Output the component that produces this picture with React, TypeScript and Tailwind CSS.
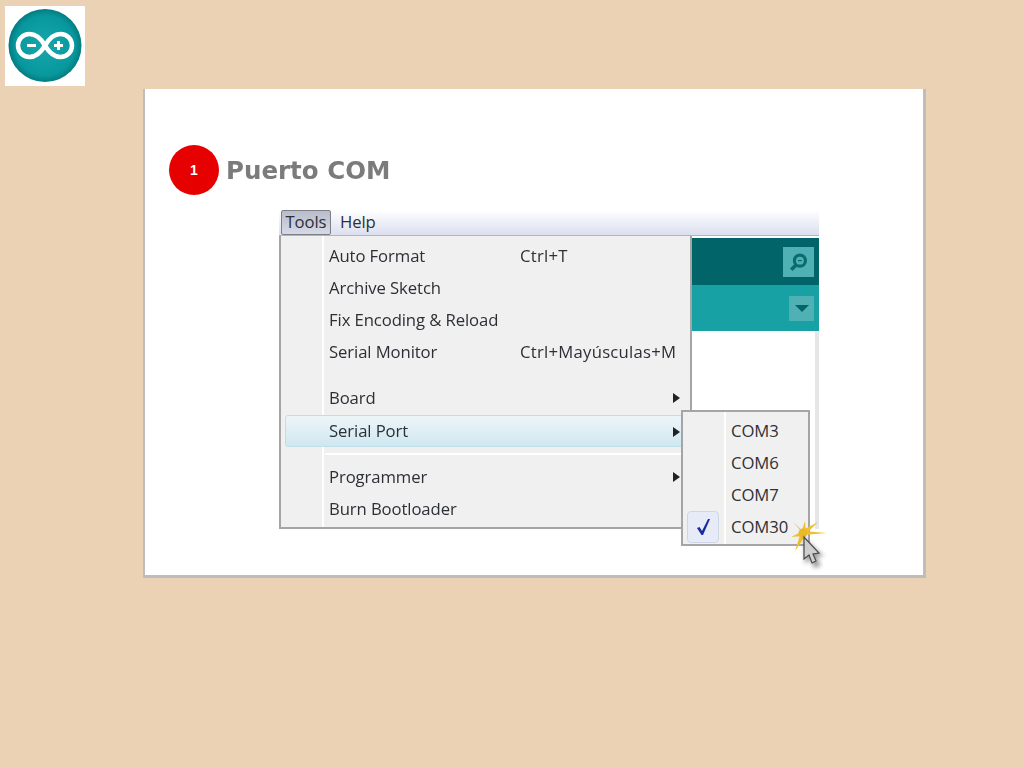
const uiFont = "font-['Open_Sans','Liberation_Sans',sans-serif]";

function ArduinoLogo() {
  return (
    <div className="h-20 w-20 bg-white">
      <svg viewBox="0 0 80 80" className="h-20 w-20 blur-[0.4px]">
        <defs>
          <radialGradient id="tealDisc" cx="50%" cy="50%" r="50%">
            <stop offset="0%" stopColor="#17a6ab" />
            <stop offset="82%" stopColor="#07989d" />
            <stop offset="100%" stopColor="#047b80" />
          </radialGradient>
        </defs>
        <circle cx="40" cy="39.5" r="36.5" fill="url(#tealDisc)" />
        <path
          d="M40 39.5C35 31 30 28 24.5 28C18 28 13 33 13 39.5C13 46 18 51 24.5 51C30 51 35 48 40 39.5C45 31 50 28 55.5 28C62 28 67 33 67 39.5C67 46 62 51 55.5 51C50 51 45 48 40 39.5Z"
          fill="none"
          stroke="#fff"
          strokeWidth="4.5"
        />
        <path d="M22 39.5H31M49 39.5H58M53.5 35V44" fill="none" stroke="#fff" strokeWidth="3" />
      </svg>
    </div>
  );
}

function MenuItem({
  label,
  shortcut,
  arrow,
  active,
}: {
  label: string;
  shortcut?: string;
  arrow?: boolean;
  active?: boolean;
}) {
  return (
    <div
      className={`relative flex h-8 items-center text-[16.7px] tracking-[-0.1px] text-[#2c3036] ${
        active
          ? "mt-px mr-[-1px] ml-1 rounded-[3px] border border-[#bfdfe8] bg-gradient-to-b from-[#edf5f9] to-[#cfe7f1] pl-[43px]"
          : "pl-[48px]"
      }`}
    >
      <span className="w-[191px] shrink-0 whitespace-nowrap">{label}</span>
      {shortcut && <span className="whitespace-nowrap tracking-[0.25px]">{shortcut}</span>}
      {arrow && (
        <span className="absolute top-[11px] right-[10px] h-0 w-0 border-y-[5px] border-l-[7px] border-y-transparent border-l-[#222]" />
      )}
    </div>
  );
}

function PortsSubmenu() {
  return (
    <div
      className={`${uiFont} absolute top-[200px] left-[402px] h-[136px] w-[129px] border-2 border-[#a5a5a5] bg-[#f0f0f0] pt-[3px] pl-[48px] text-[16.7px] tracking-[-0.1px] text-[#2c3036]`}
    >
      <div className="absolute top-0 bottom-0 left-[41px] w-0.5 bg-white" />
      <div className="absolute top-[99px] left-[4px] flex h-8 w-8 items-center justify-center rounded-[4px] border border-[#cfd6e6] bg-[#e6ebf7]">
        <svg viewBox="0 0 13 16" className="h-4 w-[13px]">
          <path d="M0 9L2.5 8L5 12L11 0L13 0L6 16L4.5 16Z" fill="#1a2a9c" />
        </svg>
      </div>
      {["COM3", "COM6", "COM7", "COM30"].map((port) => (
        <div key={port} className="flex h-8 items-center">
          {port}
        </div>
      ))}
    </div>
  );
}

function CursorSpark() {
  return (
    <svg viewBox="0 0 46 52" className="absolute top-[310px] left-[511px] h-[52px] w-[46px]">
      <defs>
        <filter id="softShadow" x="-40%" y="-40%" width="180%" height="180%">
          <feGaussianBlur stdDeviation="2" />
        </filter>
      </defs>
      <path
        d="M13 11L37 13L13 15ZM11 11L28 2L15 15ZM11 13L15 1L16 13ZM11 11L3 2L15 13ZM13 11L1 17L13 16ZM11 12L5 31L16 15Z"
        fill="#eec02e"
      />
      <circle cx="13" cy="13" r="4.5" fill="#e8b92a" />
      <path d="M14 18L15 44L20 39L24 48L31 46L27 37L34 36Z" fill="#555" opacity="0.55" filter="url(#softShadow)" />
      <path d="M14 17L14 39L19 35L22 43L26 41L23 34L29 33Z" fill="#cfcfcf" stroke="#4a4a4a" strokeWidth="1.2" />
    </svg>
  );
}

function SketchWindow() {
  return (
    <div className={`${uiFont} relative ml-[134px] w-[540px] blur-[0.3px]`}>
      {/* menu bar */}
      <div className="flex h-[26px] items-stretch border-b border-[#b5b5b8] bg-gradient-to-b from-white to-[#dcdfee] text-[16.7px] tracking-[-0.1px] text-[#2c3036]">
        <div className="ml-0.5 flex w-[50px] items-center justify-center rounded-[2px] border border-[#7d7f88] bg-gradient-to-b from-[#b9bcc9] to-[#d6d9e6] pb-px">
          Tools
        </div>
        <div className="ml-[9px] flex items-center pb-0.5">Help</div>
      </div>

      <div className="flex h-[293px] items-start">
        {/* tools menu */}
        <div className="relative h-[293px] w-[413px] shrink-0 border-r-2 border-b-2 border-l-2 border-[#a5a5a5] bg-[#f0f0f0] pt-1">
          <div className="absolute top-0 bottom-0 left-[41px] w-0.5 bg-white" />
          <MenuItem label="Auto Format" shortcut="Ctrl+T" />
          <MenuItem label="Archive Sketch" />
          <MenuItem label="Fix Encoding & Reload" />
          <MenuItem label="Serial Monitor" shortcut="Ctrl+Mayúsculas+M" />
          <div className="h-[14px]" />
          <MenuItem label="Board" arrow />
          <MenuItem label="Serial Port" arrow active />
          <div className="flex h-[14px] items-center pl-[44px]">
            <div className="h-0.5 w-full bg-white" />
          </div>
          <MenuItem label="Programmer" arrow />
          <MenuItem label="Burn Bootloader" />
        </div>

        {/* editor behind the menu */}
        <div className="flex h-full flex-1 flex-col pt-0.5">
          <div className="flex h-[47px] items-center justify-end bg-[#006468] pr-[5px]">
            <div className="flex h-[30px] w-[31px] items-center justify-center bg-[#4fb1b3]">
              <svg viewBox="0 0 24 24" className="h-[22px] w-[22px]">
                <circle cx="13" cy="10.5" r="6" fill="none" stroke="#0a6c70" strokeWidth="3.5" />
                <path d="M9 15L3.5 20.5" stroke="#0a6c70" strokeWidth="4" />
                <path d="M11 10.5H15" stroke="#0a6c70" strokeWidth="1.5" />
              </svg>
            </div>
          </div>
          <div className="flex h-[46px] items-center justify-end bg-[#17a1a5] pr-[5px]">
            <div className="flex h-[25px] w-[25px] items-center justify-center bg-[#4fb1b3]">
              <span className="h-0 w-0 border-x-[7px] border-t-[7px] border-x-transparent border-t-[#006468]" />
            </div>
          </div>
          <div className="flex-1 border-r-4 border-[#e6e6e6] bg-white" />
        </div>
      </div>

      <PortsSubmenu />
      <CursorSpark />
    </div>
  );
}

export default function App() {
  return (
    <div className="h-[768px] w-[1024px] overflow-hidden bg-[#ebd2b4] pt-1.5">
      <div className="ml-[5px]">
        <ArduinoLogo />
      </div>

      <div className="mt-[3px] ml-[143px] h-[489px] w-[783px] border-r-[3px] border-b-[3px] border-l-2 border-[#bdbdbd] bg-white pt-[56px]">
        <div className="ml-[24px] flex items-center gap-[7px]">
          <div className="flex h-[50px] w-[50px] items-center justify-center rounded-full bg-[#e60000] font-['Liberation_Sans',sans-serif] text-[14px] font-bold text-white">
            1
          </div>
          <h1 className="mt-0.5 font-['DejaVu_Sans',sans-serif] text-[24.5px] font-bold text-[#7b7b7b] blur-[0.3px]">
            Puerto COM
          </h1>
        </div>
        <div className="mt-[15px]">
          <SketchWindow />
        </div>
      </div>
    </div>
  );
}
